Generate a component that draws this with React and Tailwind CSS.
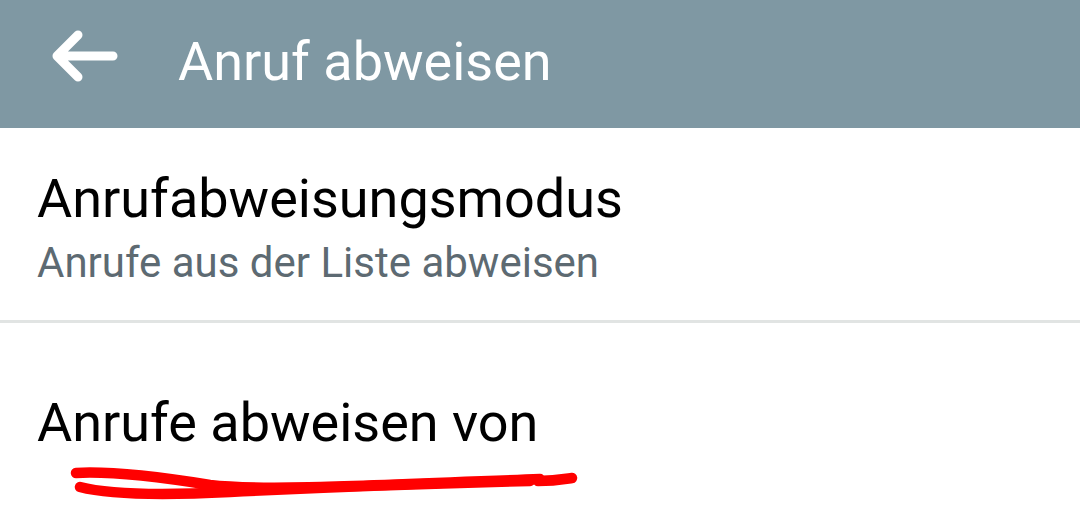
export default function App() {
  return (
    <div className="w-[1080px] h-[506px] overflow-hidden bg-white" style={{ fontFamily: "Roboto, 'Noto Sans', sans-serif" }}>
      <div className="h-[128px] bg-[#7f98a3] flex items-center">
        <div className="w-[178px] flex items-center pl-[50px] mb-[16px]">
          <svg width="68" height="54" viewBox="0 0 68 54" fill="none">
            <path d="M63 27H7M28 6L7 27L28 48" stroke="white" strokeWidth="9" strokeLinecap="round" strokeLinejoin="round" />
          </svg>
        </div>
        <div className="text-white text-[54px] leading-[54px] mb-[5px]">Anruf abweisen</div>
      </div>
      <div className="h-[195px] px-[37px] pt-[39px] border-b-[3px] border-[#e1e4e3]">
        <div className="text-black text-[54px] leading-[64px]">Anrufabweisungsmodus</div>
        <div className="text-[#5d6a72] text-[42px] leading-[56px] mt-[4px]">Anrufe aus der Liste abweisen</div>
      </div>
      <div className="px-[37px] pt-[68px]">
        <div className="text-black text-[54px] leading-[64px]">Anrufe abweisen von</div>
      </div>
      <svg className="ml-[60px] mt-[5px]" width="530" height="45" viewBox="0 0 530 45" fill="none">
        <path d="M16 13 C50 11 100 17 150 25 C200 31 300 26 480 19 L478 21 C495 21 505 19 512 18" stroke="#ff0000" strokeWidth="10.5" strokeLinecap="round" strokeLinejoin="round" fill="none" />
        <path d="M20 27 C50 35 110 35 170 32 C250 28 350 24 470 21" stroke="#ff0000" strokeWidth="10.5" strokeLinecap="round" fill="none" />
      </svg>
    </div>
  );
}
